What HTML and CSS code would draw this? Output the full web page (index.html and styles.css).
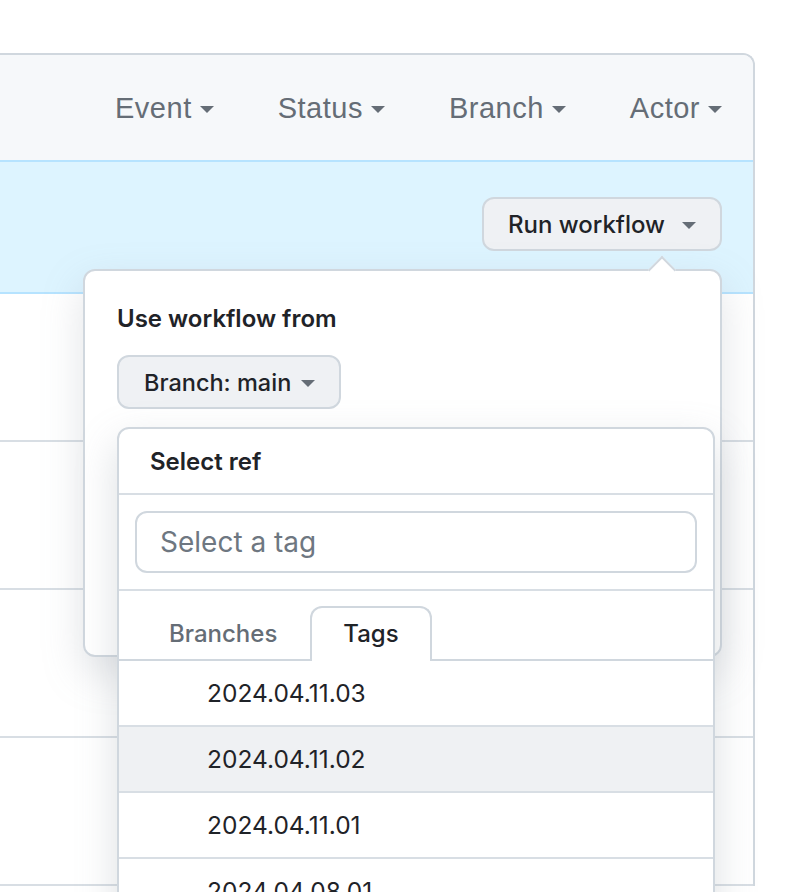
FILE: index.html
```html
<!DOCTYPE html>
<html lang="en">
<head>
<meta charset="utf-8">
<title>Workflow runs</title>
<link rel="stylesheet" href="styles.css">
</head>
<body>
<div class="box">
  <div class="box-header">
    <span class="filter">Event<span class="caret"></span></span>
    <span class="filter">Status<span class="caret"></span></span>
    <span class="filter">Branch<span class="caret"></span></span>
    <span class="filter">Actor<span class="caret"></span></span>
  </div>
  <div class="banner">
    <div class="run-wrap">
      <button class="btn run-btn">Run workflow<span class="caret dark"></span></button>
      <div class="popover">
        <div class="pop-title">Use workflow from</div>
        <div class="branch-select">
          <button class="btn branch-btn">Branch: main<span class="caret dark small"></span></button>
          <div class="select-panel">
            <div class="panel-header">Select ref</div>
            <div class="panel-filter">
              <input class="filter-input" type="text" placeholder="Select a tag">
            </div>
            <div class="tabs">
              <span class="tab">Branches</span>
              <span class="tab selected">Tags</span>
            </div>
            <div class="ref-list">
              <div class="ref">2024.04.11.03</div>
              <div class="ref active">2024.04.11.02</div>
              <div class="ref">2024.04.11.01</div>
              <div class="ref">2024.04.08.01</div>
            </div>
          </div>
        </div>
      </div>
    </div>
  </div>
  <div class="run-row"></div>
  <div class="run-row"></div>
  <div class="run-row"></div>
  <div class="run-row"></div>
</div>
</body>
</html>
```
FILE: styles.css
```css
html, body {
  margin: 0;
  padding: 0;
  background: #ffffff;
  overflow: hidden;
  height: 892px;
}
body {
  font-family: Inter, "Liberation Sans", Arial, sans-serif;
  color: #1f2328;
}
.box {
  margin: 53px 33px 0 -20px;
  border: 2px solid #d0d7de;
  border-bottom: none;
  border-radius: 12px 12px 0 0;
}
.box-header {
  height: 105px;
  background: #f6f8fa;
  border-radius: 10px 10px 0 0;
  display: flex;
  justify-content: flex-end;
  align-items: center;
  gap: 64px;
  padding-right: 31px;
}
.filter {
  font-family: "Liberation Sans", Arial, sans-serif;
  font-size: 29px;
  letter-spacing: 0.5px;
  color: #656d76;
  display: inline-flex;
  align-items: center;
  gap: 8px;
  padding-top: 2px;
}
.caret {
  display: inline-block;
  width: 0;
  height: 0;
  border-left: 7px solid transparent;
  border-right: 7px solid transparent;
  border-top: 7px solid #656d76;
  margin-top: 2px;
}
.banner {
  background: #ddf4ff;
  border-top: 2px solid #b6e3ff;
  border-bottom: 2px solid #b6e3ff;
  height: 130px;
  display: flex;
  justify-content: flex-end;
  align-items: flex-start;
  padding-right: 31px;
}
.run-wrap {
  position: relative;
  margin-top: 35px;
}
.btn {
  font-family: Inter, "Liberation Sans", Arial, sans-serif;
  font-weight: 500;
  font-size: 24px;
  color: #1f2328;
  background: #eff1f4;
  border: 2px solid #d0d7de;
  border-radius: 12px;
  height: 54px;
  display: inline-flex;
  align-items: center;
  box-sizing: border-box;
  cursor: pointer;
}
.run-btn {
  padding: 0 24px 0 24px;
  gap: 17px;
}
.popover {
  position: absolute;
  top: 72px;
  right: 0;
  width: 639px;
  height: 388px;
  box-sizing: border-box;
  background: #fff;
  border: 2px solid #d0d7de;
  border-radius: 12px;
  box-shadow: 0 16px 40px rgba(140, 149, 159, 0.25);
  padding: 30px 32px 0 32px;
  z-index: 2;
}
.popover::before {
  content: "";
  position: absolute;
  top: -11px;
  right: 48px;
  width: 18px;
  height: 18px;
  background: #fff;
  border-left: 2px solid #d0d7de;
  border-top: 2px solid #d0d7de;
  transform: rotate(45deg);
}
.pop-title {
  font-size: 24px;
  font-weight: 600;
  line-height: 36px;
  margin-bottom: 18px;
}
.branch-select {
  position: relative;
  display: inline-block;
}
.branch-btn {
  font-size: 23.5px;
  padding: 0 24px 0 25px;
  gap: 10px;
}
.select-panel {
  position: absolute;
  top: 72px;
  left: 0;
  width: 598px;
  height: 520px;
  box-sizing: border-box;
  background: #fff;
  border: 2px solid #d0d7de;
  border-radius: 12px 12px 0 0;
  box-shadow: 0 16px 40px rgba(140, 149, 159, 0.3);
  z-index: 3;
}
.panel-header {
  height: 64px;
  border-bottom: 2px solid #d8dee4;
  font-size: 24px;
  font-weight: 600;
  display: flex;
  align-items: center;
  padding-left: 31px;
}
.panel-filter {
  padding: 16px;
  border-bottom: 2px solid #d8dee4;
}
.filter-input {
  display: block;
  width: 100%;
  box-sizing: border-box;
  height: 62px;
  border: 2px solid #d0d7de;
  border-radius: 12px;
  padding: 0 23px;
  font-family: Inter, "Liberation Sans", Arial, sans-serif;
  font-size: 28px;
  color: #1f2328;
  background: #fff;
  outline: none;
}
.filter-input::placeholder { color: #6e7781; }
.tabs {
  display: flex;
  padding: 15px 0 0 16px;
  border-bottom: 2px solid #d0d7de;
  height: 53px;
}
.tab {
  display: flex;
  align-items: center;
  padding: 0 31px;
  font-size: 24px;
  font-weight: 500;
  color: #656d76;
  border: 2px solid transparent;
  border-bottom: none;
  border-radius: 12px 12px 0 0;
}
.tab:first-child { padding-left: 32px; padding-right: 31px; }
.tab.selected {
  color: #1f2328;
  border-color: #d0d7de;
  background: #fff;
  margin-bottom: -2px;
  padding-bottom: 2px;
}
.ref {
  height: 64px;
  border-bottom: 2px solid #d8dee4;
  display: flex;
  align-items: center;
  padding-left: 88px;
  font-size: 24.5px;
  color: #1f2328;
}
.ref.active { background: #eff1f3; }
.run-row {
  height: 146px;
  border-bottom: 2px solid #d8dee4;
}
```
